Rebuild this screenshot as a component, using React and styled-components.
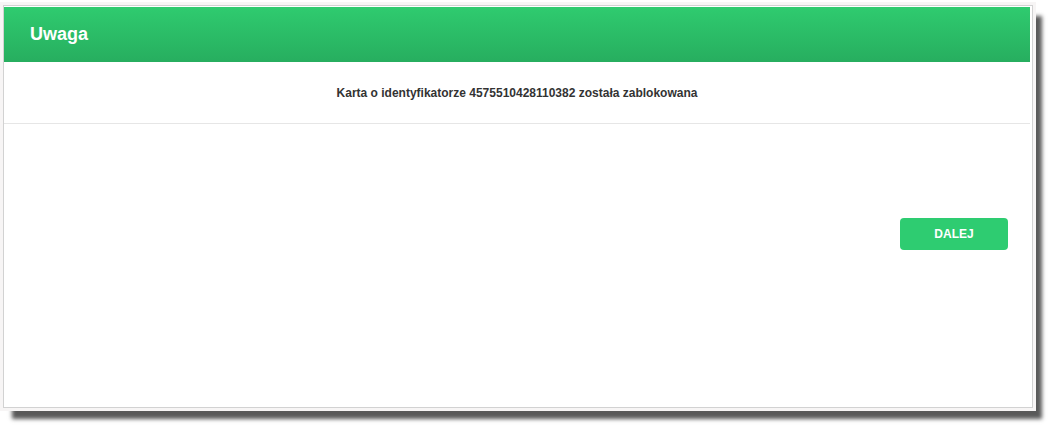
import React from 'react';
import styled, { createGlobalStyle } from 'styled-components';

const GlobalStyle = createGlobalStyle`
    body {
        margin: 0;
        background: #ffffff;
        font-family: "Liberation Sans", Arial, sans-serif;
    }
`;

const Page = styled.div`
    padding: 5px 0 20px 3px;
`;

const Frame = styled.div`
    width: 1030px;
    height: 403px;
    box-sizing: border-box;
    border: 1px solid #d2d2d2;
    background: #ffffff;
    padding: 1px 2px 2px 0;
    box-shadow: 0 0 0 3px #f7f5f5, 9px 11px 4px 0 rgba(0, 0, 0, 0.65);
    display: flex;
    flex-direction: column;
`;

const Header = styled.div`
    height: 55px;
    display: flex;
    align-items: center;
    padding-left: 26px;
    background: linear-gradient(to bottom, #2fcb6f 0%, #27ae5f 100%);
    color: #ffffff;
    font-size: 18px;
    font-weight: bold;
`;

const Message = styled.div`
    height: 61px;
    display: flex;
    align-items: center;
    justify-content: center;
    border-bottom: 1px solid #e6e6e6;
    color: #333333;
    font-size: 12px;
    font-weight: bold;
`;

const Actions = styled.div`
    display: flex;
    justify-content: flex-end;
    padding: 94px 22px 0 0;
`;

const Button = styled.button`
    width: 108px;
    height: 32px;
    border: none;
    border-radius: 4px;
    background: #2ecc71;
    color: #ffffff;
    font-family: "Liberation Sans", Arial, sans-serif;
    font-size: 12px;
    font-weight: bold;
    cursor: pointer;
`;

const App = () => {
    return (
        <Page>
            <GlobalStyle />
            <Frame>
                <Header>Uwaga</Header>
                <Message>Karta o identyfikatorze 4575510428110382 została zablokowana</Message>
                <Actions>
                    <Button type="button">DALEJ</Button>
                </Actions>
            </Frame>
        </Page>
    );
};

export default App;
